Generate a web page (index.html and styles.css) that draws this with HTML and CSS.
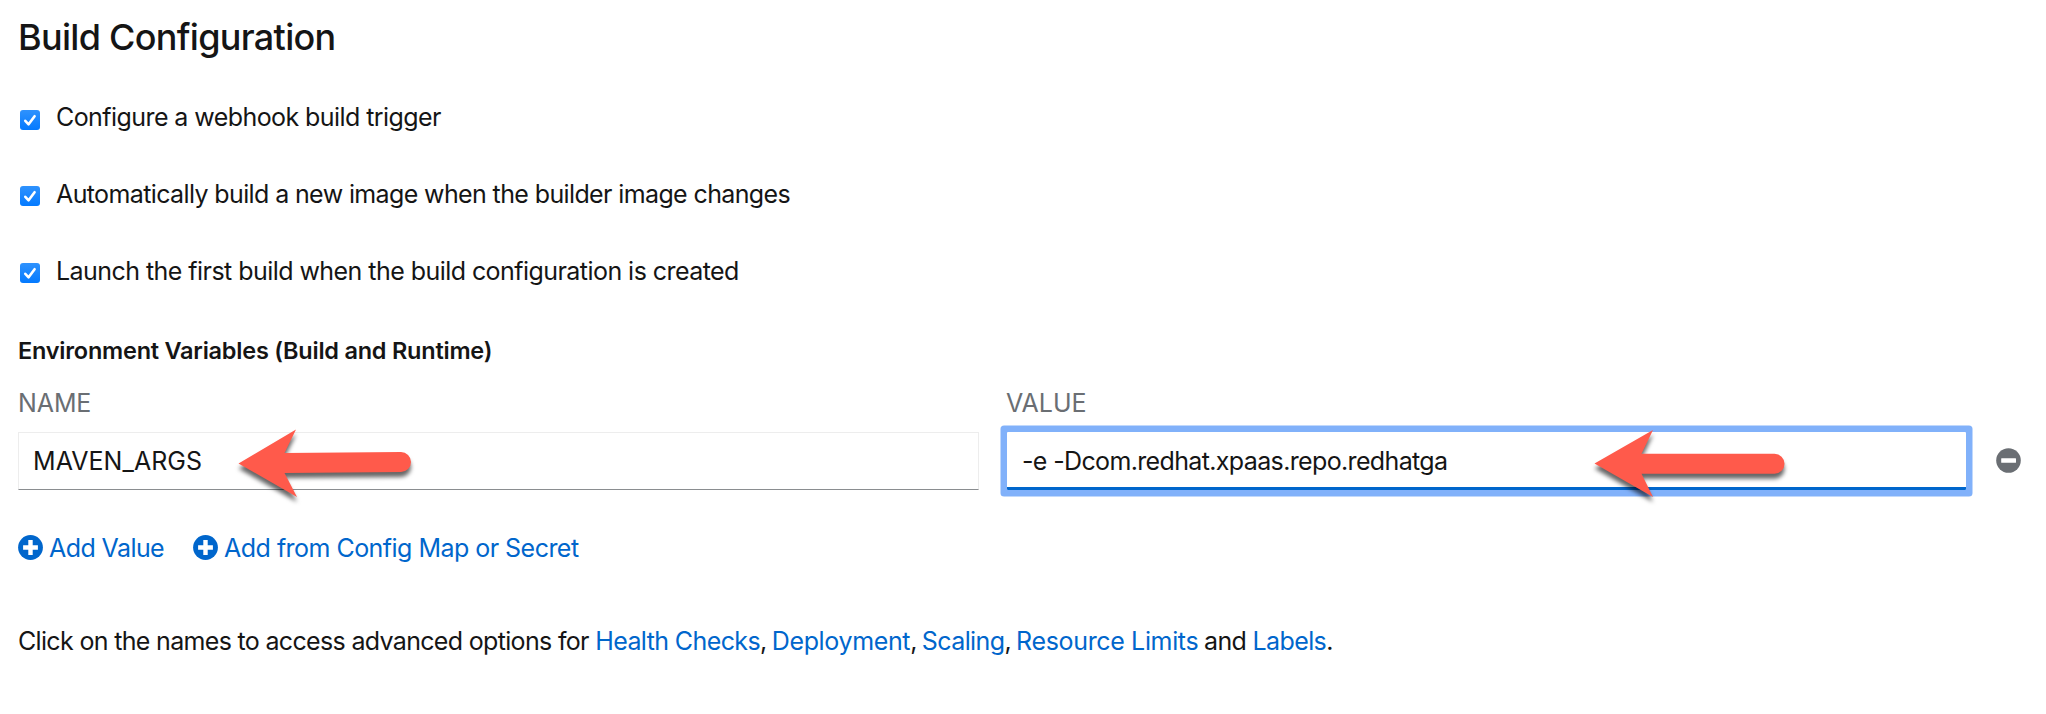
FILE: index.html
```html
<!DOCTYPE html>
<html lang="en">
<head>
<meta charset="utf-8">
<title>Build Configuration</title>
<link rel="stylesheet" href="styles.css">
</head>
<body>
<svg class="defs" width="0" height="0">
  <defs>
    <linearGradient id="check-fill" x1="0" y1="0" x2="0" y2="1">
      <stop offset="0" stop-color="#2f92fd"/>
      <stop offset="1" stop-color="#047aff"/>
    </linearGradient>
    <symbol id="check" viewBox="0 0 20 20">
      <rect width="20" height="20" rx="3" fill="url(#check-fill)"/>
      <path d="M5.3 10.8 L8.6 14.3 L14.6 6.2" fill="none" stroke="#fff" stroke-width="2.6" stroke-linecap="round" stroke-linejoin="round"/>
    </symbol>
    <symbol id="plus" viewBox="0 0 25 25">
      <circle cx="12.5" cy="12.5" r="12.4" fill="#06c"/>
      <path d="M12.5 5.1V19.9M5.1 12.5H19.9" stroke="#fff" stroke-width="4.4"/>
    </symbol>
  </defs>
</svg>
<main class="page">
  <h1 class="title">Build Configuration</h1>
  <div class="checks">
    <label class="check"><svg class="box box-first"><use href="#check"/></svg><span class="t-webhook">Configure a webhook build trigger</span></label>
    <label class="check"><svg class="box"><use href="#check"/></svg><span class="t-auto">Automatically build a new image when the builder image changes</span></label>
    <label class="check"><svg class="box"><use href="#check"/></svg><span class="t-launch">Launch the first build when the build configuration is created</span></label>
  </div>
  <h2 class="section">Environment Variables (Build and Runtime)</h2>
  <div class="pairs">
    <div class="column name-column">
      <div class="head head-name">NAME</div>
      <div class="field"><span class="t-name">MAVEN_ARGS</span>
        <svg class="arrow arrow-name" width="180" height="80" viewBox="0 0 180 80">
          <path d="M8.5 33.5 L66 -0.5 L54.5 23 L171 22 A10 10 0 0 1 171 42 L54.5 43 L67 67 Z" fill="#ff5a4b"/>
        </svg>
      </div>
    </div>
    <div class="column value-column">
      <div class="head head-value">VALUE</div>
      <div class="field focused"><span class="t-value">-e -Dcom.redhat.xpaas.repo.redhatga</span>
        <svg class="arrow arrow-value" width="200" height="80" viewBox="0 0 200 80">
          <path d="M8.5 33.5 L67 0 L55.5 23.7 L188.5 23.7 A10 10 0 0 1 188.5 43.7 L55.5 43.7 L67 67 Z" fill="#ff5a4b"/>
        </svg>
      </div>
    </div>
    <svg class="remove" width="25" height="25" viewBox="0 0 25 25">
      <circle cx="12.5" cy="12.5" r="12.3" fill="#6a6e73"/>
      <rect x="5.2" y="10.2" width="14.8" height="4.6" rx="0.5" fill="#fff"/>
    </svg>
  </div>
  <div class="actions">
    <a class="action"><svg class="plus"><use href="#plus"/></svg><span class="t-add">Add Value</span></a>
    <a class="action"><svg class="plus"><use href="#plus"/></svg><span class="t-config">Add from Config Map or Secret</span></a>
  </div>
  <p class="hint">Click on the names to access advanced options for <a>Health Checks</a><span class="sep">, </span><a class="wide">Deployment</a><span class="sep">, </span><a>Scaling</a><span class="sep">, </span><a class="wide">Resource Limits</a><span class="sep"> </span>and <a>Labels</a>.</p>
</main>
</body>
</html>
```
FILE: styles.css
```css
body {
  margin: 0;
  background: #fff;
  color: #151515;
  font: 400 25px/32px Inter, "Liberation Sans", sans-serif;
  white-space: nowrap;
}
.defs { position: absolute; }
.page { padding: 17px 0 0 18px; }
.title {
  margin: 0 0 44px;
  font-size: 36px;
  font-weight: 500;
  line-height: 40px;
  letter-spacing: -0.7px;
}
.checks { display: flex; flex-direction: column; gap: 45px; }
.check { display: flex; gap: 16px; padding-left: 2px; }
.box { width: 20px; height: 20px; margin-top: 8px; }
.box-first { margin-top: 9px; }
.t-webhook { letter-spacing: -0.57px; }
.t-auto { letter-spacing: -0.62px; }
.t-launch { letter-spacing: -0.55px; }
.section {
  margin: 48px 0 20px;
  font-size: 23.5px;
  font-weight: 600;
  line-height: 32px;
  letter-spacing: -0.23px;
}
.pairs { display: flex; }
.column { display: flex; flex-direction: column; gap: 13px; }
.name-column { width: 961px; margin-right: 28px; }
.value-column { width: 959px; margin-right: 30px; }
.head { color: #6a6e73; }
.head-name { letter-spacing: -0.1px; }
.head-value { margin-left: -1px; }
.field {
  position: relative;
  box-sizing: border-box;
  height: 58px;
  padding: 12px 14px;
  border: 1px solid #ededed;
  border-bottom-color: #8a8d90;
}
.focused {
  padding: 13px 15px;
  border: 0;
  border-bottom: 3px solid #06c;
  box-shadow: 0 0 0 6.5px #81b1fa;
  border-radius: 1px;
}
.t-name { letter-spacing: 0.05px; }
.t-value { letter-spacing: -0.64px; }
.arrow {
  position: absolute;
  overflow: visible;
  filter: drop-shadow(0 5px 2px rgba(0, 0, 0, 0.6));
}
.arrow-name { left: 210.5px; top: -3px; }
.arrow-value { left: 578.5px; top: -2.5px; }
.remove { margin-top: 61px; }
.actions { display: flex; gap: 29px; margin-top: 42px; }
.action { display: flex; gap: 6px; color: #06c; }
.plus { width: 25px; height: 25px; margin-top: 3px; }
.t-add { letter-spacing: -0.58px; }
.t-config { letter-spacing: -0.53px; }
.hint { margin: 61px 0 0; letter-spacing: -0.67px; }
.hint a { color: #06c; letter-spacing: -0.6px; }
.hint a.wide { letter-spacing: -0.35px; }
.sep { letter-spacing: -1.3px; }
```
